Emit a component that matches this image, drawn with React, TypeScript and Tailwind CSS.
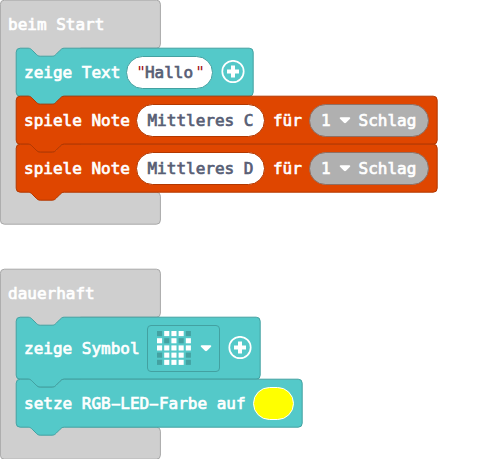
import type { ReactNode } from "react";

const TEAL = { fill: "#54c9c9", stroke: "#43a1a1" };
const ORANGE = { fill: "#df4600", stroke: "#b23800" };

// Outline of a statement block: notch on the top edge, matching tab on the bottom edge.
function blockPath(w: number, h: number) {
  return `M0,4 A4,4 0 0 1 4,0 H12 c2,0 3,1 4,2 l4,4 c1,1 2,2 4,2 h12 c2,0 3,-1 4,-2 l4,-4 c1,-1 2,-2 4,-2 H${w - 4} a4,4 0 0 1 4,4 V${h - 4} a4,4 0 0 1 -4,4 H48 c-2,0 -3,1 -4,2 l-4,4 c-1,1 -2,2 -4,2 h-12 c-2,0 -3,-1 -4,-2 l-4,-4 c-1,-1 -2,-2 -4,-2 H4 a4,4 0 0 1 -4,-4 z`;
}

function Statement({ w, h, color, children }: { w: number; h: number; color: typeof TEAL; children: ReactNode }) {
  return (
    <div className="relative flex items-center pl-2" style={{ width: w, height: h }}>
      <svg className="absolute left-0 top-0 overflow-visible" width={w} height={h}>
        <path d={blockPath(w, h)} fill={color.fill} stroke={color.stroke} transform="translate(.2 .2)" />
      </svg>
      {children}
    </div>
  );
}

function Event({ title, inner, children }: { title: string; inner: number; children: ReactNode }) {
  const total = 48 + inner + 32;
  return (
    <section className="relative w-[160px]">
      <svg className="absolute left-0 top-0 overflow-visible" width={160} height={total}>
        <path
          d={`M0,4 a4,4 0 0 1 4,-4 H156 a4,4 0 0 1 4,4 V44 a4,4 0 0 1 -4,4 H80 V${48 + inner} H156 a4,4 0 0 1 4,4 V${total - 4} a4,4 0 0 1 -4,4 H4 a4,4 0 0 1 -4,-4 z`}
          fill="#cfcfcf"
          stroke="#a8a8a8"
          transform="translate(.4 .2)"
        />
      </svg>
      <h2 className="flex h-12 items-center pl-2">
        <Label>{title}</Label>
      </h2>
      <div className="pb-8 pl-4">{children}</div>
    </section>
  );
}

function Label({ children }: { children: ReactNode }) {
  return <span className="relative whitespace-pre pt-[2px] text-white">{children}</span>;
}

function Dash() {
  return <span className="inline-block scale-x-85">–</span>;
}

function Plus({ className }: { className: string }) {
  return (
    <svg className={`relative shrink-0 ${className}`} width="24" height="24" viewBox="0 0 24 24">
      <circle cx="12" cy="11.5" r="10.7" fill="none" stroke="#fff" strokeWidth="1.7" />
      <path d="M12 5.5v12M6 11.5h12" stroke="#fff" strokeWidth="4" />
    </svg>
  );
}

function Caret({ className }: { className: string }) {
  return (
    <svg className={`relative shrink-0 ${className}`} width="12" height="8" viewBox="0 0 12 8">
      <path d="M1.6 1.2h8.8c.9 0 1.2.9.6 1.5L7 6.8c-.6.6-1.4.6-2 0L1 2.7c-.6-.6-.3-1.5.6-1.5z" fill="#fff" />
    </svg>
  );
}

function NoteRow({ note }: { note: string }) {
  return (
    <Statement w={421} h={48} color={ORANGE}>
      <Label>spiele Note</Label>
      <span className="relative ml-[6px] flex h-[33px] w-[129px] items-center justify-center rounded-full border border-[#b23800] bg-white pt-[2px] text-[#575e75]">
        {note}
      </span>
      <span className="w-[8px]" />
      <Label>für</Label>
      <span className="relative ml-[7px] flex h-[33px] w-[120px] items-center rounded-full border border-[#8f6f63] bg-[#b0b0b0] pl-[11px] text-white">
        <span className="pt-[2px]">1</span>
        <Caret className="ml-[8px] mr-[8px]" />
        <span className="pt-[2px]">Schlag</span>
      </span>
    </Statement>
  );
}

const ICON = ["01110", "10101", "11111", "01110", "01110"];

export default function App() {
  return (
    <main className="h-[459px] w-[489px] overflow-hidden bg-white font-['DejaVu_Sans_Mono',monospace] text-[16px] font-normal leading-6 [-webkit-text-stroke:0.7px_currentColor]">
      <Event title="beim Start" inner={144}>
        <Statement w={237} h={48} color={TEAL}>
          <Label>zeige Text</Label>
          <span className="relative ml-[6px] flex h-[33px] w-[87px] items-center rounded-full border border-[#43a1a1] bg-white pl-[9px] pt-[2px] text-[#575e75]">
            <span className="-mr-px text-[#a31515] [-webkit-text-stroke:0]">"</span>
            Hallo
            <span className="ml-[2px] text-[#a31515] [-webkit-text-stroke:0]">"</span>
          </span>
          <Plus className="ml-[8px]" />
        </Statement>
        <NoteRow note="Mittleres C" />
        <NoteRow note="Mittleres D" />
      </Event>
      <div className="h-[45px]" />
      <Event title="dauerhaft" inner={110}>
        <Statement w={244} h={62} color={TEAL}>
          <Label>zeige Symbol</Label>
          <span className="relative ml-[7px] flex h-[47px] w-[73px] items-center rounded-[4px] border border-[#43a1a1] pl-[9px]">
            <svg className="shrink-0" width="34" height="34" viewBox="0 0 34 34">
              {ICON.flatMap((row, y) =>
                row.split("").map((on, x) => (
                  <rect
                    key={`${x}-${y}`}
                    x={x * 7.2}
                    y={y * 7.2}
                    width="5.1"
                    height="5.1"
                    fill={on === "1" ? "#fff" : "#43a1a1"}
                  />
                )),
              )}
            </svg>
            <Caret className="ml-[9px]" />
          </span>
          <Plus className="ml-[8px]" />
        </Statement>
        <Statement w={286} h={48} color={TEAL}>
          <Label>
            setze RGB<Dash />LED<Dash />Farbe auf
          </Label>
          <span className="relative ml-[7px] h-[33px] w-[41px] rounded-full border border-white bg-[#ffff00]" />
        </Statement>
      </Event>
    </main>
  );
}
